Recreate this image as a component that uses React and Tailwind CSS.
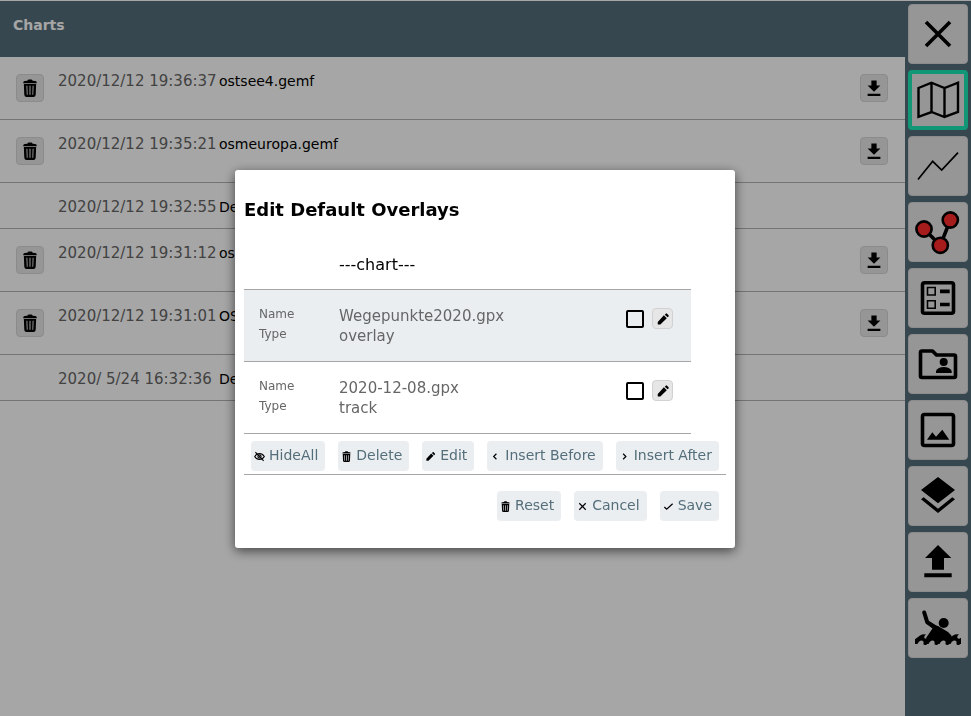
import React from "react";

const Svg = ({ children, box = 24, className }) => (
  <svg viewBox={`0 0 ${box} ${box}`} className={`shrink-0 ${className}`} fill="currentColor" aria-hidden="true">
    {children}
  </svg>
);

const Trash = ({ className }) => (
  <Svg className={className}>
    <path d="M3 5Q3 2.800 5 2.600L8.500 2.200Q9 .5 10.500 .5H13.500Q15 .5 15.500 2.200L19 2.600Q21 2.800 21 5V5.500H3Z" />
    <path fillRule="evenodd" d="M3.800 6.500H20.200L19.600 21Q19.400 24 16.500 24H7.500Q4.600 24 4.400 21ZM7.200 9L7.700 21H8.900L8.500 9ZM11.300 9V21H12.700V9ZM15.500 9L15.100 21H16.300L16.800 9Z" />
  </Svg>
);
const Pencil = ({ className }) => (
  <Svg className={className}>
    <path d="M3 17V21.500H7.500L18.500 10.500L13.500 5.500ZM21.500 7.500a1.600 1.600 0 0 0 0-2L19 2.800a1.600 1.600 0 0 0-2.200 0L15 4.500L20 9.200Z" />
  </Svg>
);
const Download = ({ className }) => (
  <Svg className={className}>
    <path d="M8.500 2H15.500V8.500H20.500L12 17L3.500 8.500H8.500ZM3.500 19.500H20.500V22.500H3.500Z" />
  </Svg>
);
const Stroke = ({ d, className }) => (
  <Svg className={className}>
    <path d={d} fill="none" stroke="currentColor" strokeWidth="2.600" />
  </Svg>
);
const EyeOff = ({ className }) => (
  <Svg className={className}>
    <g fill="none" stroke="currentColor" strokeWidth="2.400">
      <path d="M1.500 12Q5.500 5.500 12 5.500T22.500 12Q18.500 18.500 12 18.500T1.500 12Z" />
      <circle cx="12" cy="12" r="3.500" />
      <path d="M3 2.500L21 21.500" />
    </g>
  </Svg>
);

const line = { fill: "none", stroke: "currentColor" };
const wave =
  "M-1 42L5 37.500Q8 35.500 11 36.500Q8.500 38 9.500 40Q11 42 15 39Q13 46 11 47Q8 47.500 8.500 45Q9 42.500 6.500 42.500Q4 42.500 2.500 46L-1 46Z";

const tools = [
  { label: "Close", art: <path {...line} strokeWidth="3.600" d="M18 18L42 42M42 18L18 42" /> },
  {
    label: "Charts",
    active: true,
    art: <path {...line} strokeWidth="2.400" d="M10.500 18L23.500 12.700L36.500 18L50 12.700V42L36.500 47L23.500 42L10.500 46.800ZM23.500 12.700V42M36.500 18V47" />,
  },
  { label: "Tracks", art: <path {...line} strokeWidth="1.700" d="M10 43.500L24.700 25.300L33.700 34L50 16.700" /> },
  {
    label: "Routes",
    art: (
      <g stroke="currentColor">
        <path fill="none" strokeWidth="3.600" d="M16 27L32.300 43.300L42.300 18" />
        <g fill="#ff2a2a" strokeWidth="2.600">
          <circle cx="16" cy="27" r="7.600" />
          <circle cx="42.300" cy="18" r="7.600" />
          <circle cx="32.300" cy="43.300" r="7.600" />
        </g>
      </g>
    ),
  },
  {
    label: "Layouts",
    art: (
      <g {...line}>
        <rect x="14.500" y="14.700" width="31" height="30.600" rx="2" strokeWidth="3.600" />
        <path strokeWidth="1.600" d="M19.500 19.500H27.200V27H19.500ZM19.500 32.700H27.200V40.200H19.500Z" />
        <path strokeWidth="3.700" d="M32 23.300H41.700M32 36.500H41.700" />
      </g>
    ),
  },
  {
    label: "User files",
    art: (
      <g>
        <path {...line} strokeWidth="3.600" strokeLinejoin="round" d="M14 17H24.500L28.500 21H46Q47.500 21 47.500 22.500V42Q47.500 43.500 46 43.500H14Q12.500 43.500 12.500 42V18.500Q12.500 17 14 17Z" />
        <circle cx="35.700" cy="28" r="4" />
        <path d="M28 39V37Q30 33 35.800 33T43.700 37V39Z" />
      </g>
    ),
  },
  {
    label: "Images",
    art: (
      <g>
        <rect {...line} x="14.500" y="14.500" width="31" height="31" rx="2" strokeWidth="3.600" />
        <path d="M19 39.700L24.300 32.300L28 36.700L34.300 29.700L41.300 39.700Z" />
      </g>
    ),
  },
  { label: "Overlays", art: <path d="M30 11L47 24L30 37.300L13 24ZM13 33.300L15.700 31.300L30 42.700L44.300 31.300L47 33.300L30 47Z" /> },
  { label: "Upload", art: <path d="M30 13L43.300 26H36V37.700H24V26H17ZM16.300 41.300H43.700V45.300H16.300Z" /> },
  {
    label: "Man overboard",
    art: (
      <g>
        <clipPath id="sea">
          <rect x="7" y="10" width="46" height="40" />
        </clipPath>
        <circle cx="35.700" cy="25" r="5" />
        <path {...line} strokeWidth="4" strokeLinecap="round" strokeLinejoin="round" d="M16.200 14.500L19.300 24.300L30 31" />
        <path d="M19 26L24.500 30.500L18 40L20 43L26 41L32 43L38 41L45 41Q44 37 40 34L30 28Z" />
        <g clipPath="url(#sea)">
          {[7, 18, 29, 40, 51].map((x, i) => (
            <path key={x} d={wave} transform={`translate(${x} 0)`} />
          ))}
        </g>
      </g>
    ),
  },
];

const charts = [
  { time: "2020/12/12 19:36:37", name: "ostsee4.gemf", file: true },
  { time: "2020/12/12 19:35:21", name: "osmeuropa.gemf", file: true },
  { time: "2020/12/12 19:32:55", name: "De" },
  { time: "2020/12/12 19:31:12", name: "os", file: true },
  { time: "2020/12/12 19:31:01", name: "OS", file: true },
  { time: "2020/ 5/24 16:32:36", name: "De" },
];

const SmallButton = ({ label, children }) => (
  <button type="button" aria-label={label} className="flex size-7 shrink-0 items-center justify-center rounded border border-[#d6d6d6] bg-[#e6e6e6]">
    {children}
  </button>
);

const DialogButton = ({ icon, children }) => (
  <button type="button" className="flex h-[30px] items-center gap-1 rounded bg-[#eaeef1] pr-[7px] pb-0.5 pl-[3px] text-sm text-[#546e7a]">
    <span className="pt-0.5 text-black">{icon}</span>
    {children}
  </button>
);

const OverlayRow = ({ id, name, type, selected }) => (
  <li className={`flex h-[72px] items-start border-b border-[#a6a6a6] pt-4 pr-[18px] pl-[15px] text-[#666] ${selected ? "bg-[#eaeef1]" : ""}`}>
    <dl className="grid flex-1 grid-cols-[80px_1fr] text-[15px] leading-5">
      <dt className="text-xs leading-4">Name</dt>
      <dd>{name}</dd>
      <dt className="text-xs leading-4">Type</dt>
      <dd>{type}</dd>
    </dl>
    <div className="flex items-center gap-2 pt-0.5">
      <input id={id} type="checkbox" aria-label={`Show ${name}`} className="size-[18px] appearance-none rounded-xs border-2 border-black bg-transparent" />
      <button type="button" aria-label={`Edit ${name}`} className="flex size-[21px] items-center justify-center rounded border border-[#d2d2d2] bg-[#e6e6e6] text-black">
        <Pencil className="size-3.5" />
      </button>
    </div>
  </li>
);

export default function App() {
  return (
    <div className="flex min-h-screen bg-white pt-px font-['DejaVu_Sans',sans-serif] text-sm text-black">
      <main className="min-w-0 flex-1">
        <header className="h-14 bg-[#546e7a] px-[13px] pt-3.5">
          <h1 className="font-bold leading-5 text-white">Charts</h1>
        </header>
        <ul>
          {charts.map((c) => (
            <li key={c.time} className={`flex items-start border-b border-[#b3b3b3] pr-[17px] pl-4 ${c.file ? "h-[63px]" : "h-[46px]"}`}>
              <div className="w-[42px] shrink-0 pt-[17px]">
                {c.file && <SmallButton label={`Delete ${c.name}`}><Trash className="size-[18px]" /></SmallButton>}
              </div>
              <div className="flex flex-1 pt-3.5 leading-5">
                <time className="w-[161px] whitespace-pre text-[15px] text-[#666]">{c.time}</time>
                <span>{c.name}</span>
              </div>
              {c.file && (
                <div className="pt-[17px]">
                  <SmallButton label={`Download ${c.name}`}><Download className="size-[18px]" /></SmallButton>
                </div>
              )}
            </li>
          ))}
        </ul>
      </main>
      <nav className="flex w-[66px] shrink-0 flex-col gap-1.5 bg-[#546e7a] p-[3px]">
        {tools.map((t) => (
          <button
            key={t.label}
            type="button"
            aria-label={t.label}
            className={`flex size-15 items-center justify-center rounded bg-[#e6e6e6] ${t.active ? "border-4 border-[#1de9b6]" : "border border-[#d6d6d6]"}`}
          >
            <Svg box={60} className="size-15">{t.art}</Svg>
          </button>
        ))}
      </nav>

      <div className="fixed inset-0 flex items-center justify-center bg-black/35 pt-0.5 pr-px">
        <section role="dialog" aria-labelledby="dialog-title" className="w-[500px] max-w-full rounded-[3px] bg-white px-[9px] pt-[26px] pb-[27px] shadow-[0_3px_12px_rgba(0,0,0,0.6)]">
          <h2 id="dialog-title" className="text-lg leading-7 font-bold">Edit Default Overlays</h2>
          <ul className="mt-4 mr-[35px]">
            <li className="flex h-[50px] items-center border-b border-[#a6a6a6] pl-[95px] text-base">---chart---</li>
            <OverlayRow id="overlay-1" name="Wegepunkte2020.gpx" type="overlay" selected />
            <OverlayRow id="overlay-2" name="2020-12-08.gpx" type="track" />
          </ul>
          <div className="flex justify-between border-b border-[#a6a6a6] px-[7px] pt-[7px] pb-[3px]">
            <DialogButton icon={<EyeOff className="size-[11px]" />}>HideAll</DialogButton>
            <DialogButton icon={<Trash className="size-[11px]" />}>Delete</DialogButton>
            <DialogButton icon={<Pencil className="size-[11px]" />}>Edit</DialogButton>
            <DialogButton icon={<Stroke className="size-[11px]" d="M14 6L8 12L14 18" />}>Insert Before</DialogButton>
            <DialogButton icon={<Stroke className="size-[11px]" d="M9 6L15 12L9 18" />}>Insert After</DialogButton>
          </div>
          <div className="flex justify-end gap-[13px] px-[7px] pt-4">
            <DialogButton icon={<Trash className="size-[11px]" />}>Reset</DialogButton>
            <DialogButton icon={<Stroke className="size-[11px]" d="M5 5L19 19M19 5L5 19" />}>Cancel</DialogButton>
            <DialogButton icon={<Stroke className="size-[11px]" d="M3 13L8 18L21 6" />}>Save</DialogButton>
          </div>
        </section>
      </div>
    </div>
  );
}
